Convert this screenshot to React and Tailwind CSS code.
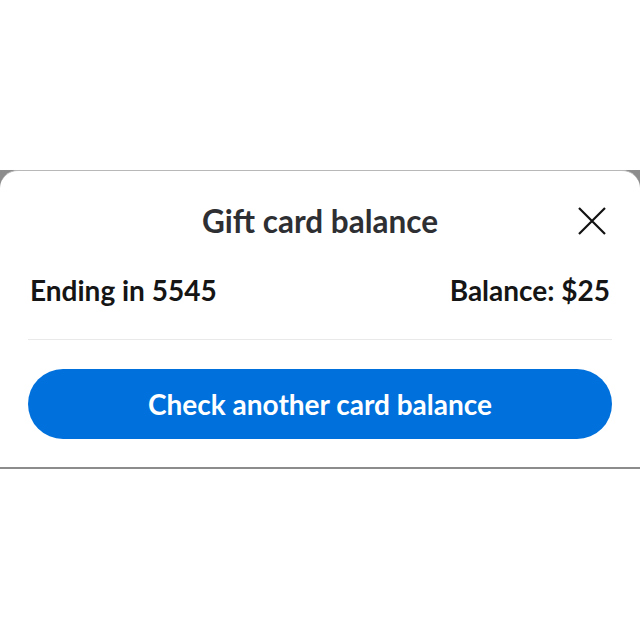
export default function App() {
  return (
    <div className="w-[640px] h-[640px] bg-white flex flex-col" style={{ fontFamily: "Lato, 'Noto Sans', sans-serif" }}>
      <div className="h-[170px] bg-white shrink-0" />
      <div className="bg-[#8c8c8c] shrink-0">
        <div className="h-[297px] bg-white rounded-t-[18px] flex flex-col px-[28px] border-t border-[#b8b8b8]">
          <div className="relative h-[101px] flex items-center justify-center">
            <h2 className="text-[31.5px] font-bold text-[#2e2f32] leading-none">Gift card balance</h2>
            <button className="absolute right-[6px] top-[36px] w-[28px] h-[28px]">
              <svg viewBox="0 0 28 28" className="w-[28px] h-[28px]" fill="none" stroke="#111" strokeWidth="2.2" strokeLinecap="butt">
                <path d="M1 1 L27 27 M27 1 L1 27" />
              </svg>
            </button>
          </div>
          <div className="flex justify-between items-center h-[36px] px-[2px] text-[28px] font-bold text-[#151515] leading-none">
            <span>Ending in 5545</span>
            <span>Balance: $25</span>
          </div>
          <div className="h-[32px] border-b border-[#e9e9e9]" />
          <div className="mt-[29px] h-[70px] rounded-full bg-[#0071dc] flex items-center justify-center">
            <span className="text-white text-[28px] font-bold leading-none">Check another card balance</span>
          </div>
        </div>
      </div>
      <div className="h-[2px] bg-[#8c8c8c] shrink-0" />
      <div className="flex-1 bg-white" />
    </div>
  );
}
